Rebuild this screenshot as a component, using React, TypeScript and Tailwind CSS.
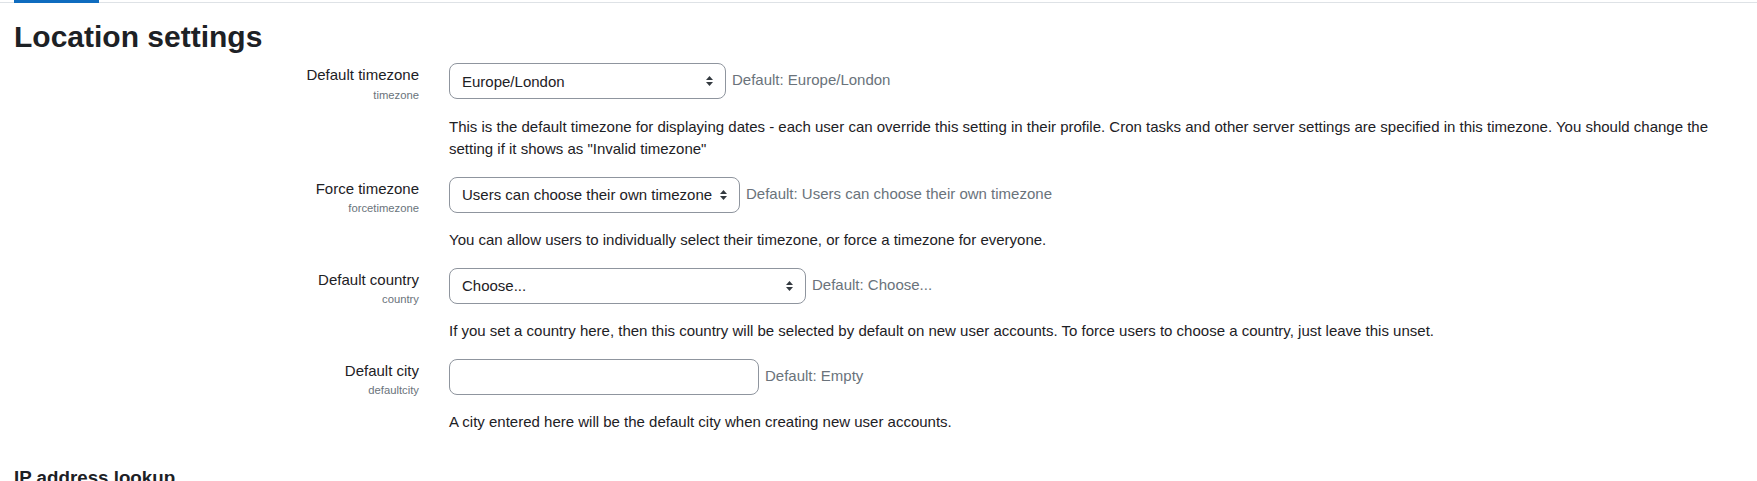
import React from "react";

const font = { fontFamily: '"Liberation Sans", Arial, sans-serif' };

function Arrows() {
  return (
    <svg width="7" height="10" viewBox="0 0 4 5" preserveAspectRatio="none" className="shrink-0">
      <path d="M2 0L0 2h4zm0 5L0 3h4z" fill="#343a40" />
    </svg>
  );
}

function SelectBox({ value, width }: { value: string; width: string }) {
  return (
    <div
      className={`${width} h-[36px] shrink-0 border border-[#8f959e] rounded-[8px] bg-white pl-[12px] pr-[12px] flex items-center justify-between text-[15px] leading-[22.5px] text-[#1d2125]`}
    >
      <span className="whitespace-nowrap pt-[2px]">{value}</span>
      <Arrows />
    </div>
  );
}

function InputBox({ width }: { width: string }) {
  return (
    <div className={`${width} h-[36px] shrink-0 border border-[#8f959e] rounded-[8px] bg-white`} />
  );
}

function Row({
  label,
  name,
  control,
  def,
  desc,
  className,
}: {
  label: string;
  name: string;
  control: React.ReactNode;
  def: string;
  desc: string;
  className: string;
}) {
  return (
    <div className={`flex items-start ${className}`}>
      <div className="w-[405px] shrink-0 text-right pt-[1px]">
        <div className="text-[15px] leading-[22.5px] text-[#1d2125]">{label}</div>
        <div className="text-[11.25px] leading-[16.875px] text-[#6a737b]">{name}</div>
      </div>
      <div className="ml-[30px] flex-1 min-w-0">
        <div className="flex items-start">
          {control}
          <span className="ml-[6px] pt-[6px] text-[15px] leading-[22.5px] text-[#6a737b] whitespace-nowrap">
            {def}
          </span>
        </div>
        <div className="mt-[16.5px] text-[15px] leading-[22.5px] text-[#1d2125]">{desc}</div>
      </div>
    </div>
  );
}

export default function App() {
  return (
    <div className="w-[1757px] h-[481px] overflow-hidden bg-white" style={font}>
      <div className="h-[3px] border-b border-[#dee2e6] flex">
        <div className="ml-[14px] w-[85px] h-[3px] bg-[#0f6cbf]" />
      </div>
      <div className="px-[14px]">
        <h2 className="mt-[16px] text-[30px] leading-[36px] font-bold text-[#1d2125]">Location settings</h2>
        <Row
          className="mt-[8px]"
          label="Default timezone"
          name="timezone"
          control={<SelectBox value="Europe/London" width="w-[277px]" />}
          def="Default: Europe/London"
          desc={
            'This is the default timezone for displaying dates - each user can override this setting in their profile. Cron tasks and other server settings are specified in this timezone. You should change the setting if it shows as "Invalid timezone"'
          }
        />
        <Row
          className="mt-[16px]"
          label="Force timezone"
          name="forcetimezone"
          control={<SelectBox value="Users can choose their own timezone" width="w-[291px]" />}
          def="Default: Users can choose their own timezone"
          desc="You can allow users to individually select their timezone, or force a timezone for everyone."
        />
        <Row
          className="mt-[16px]"
          label="Default country"
          name="country"
          control={<SelectBox value="Choose..." width="w-[357px]" />}
          def="Default: Choose..."
          desc="If you set a country here, then this country will be selected by default on new user accounts. To force users to choose a country, just leave this unset."
        />
        <Row
          className="mt-[16px]"
          label="Default city"
          name="defaultcity"
          control={<InputBox width="w-[310px]" />}
          def="Default: Empty"
          desc="A city entered here will be the default city when creating new user accounts."
        />
        <h3 className="mt-[33px] text-[18.75px] leading-[22.5px] font-bold text-[#1d2125]">IP address lookup</h3>
      </div>
    </div>
  );
}
